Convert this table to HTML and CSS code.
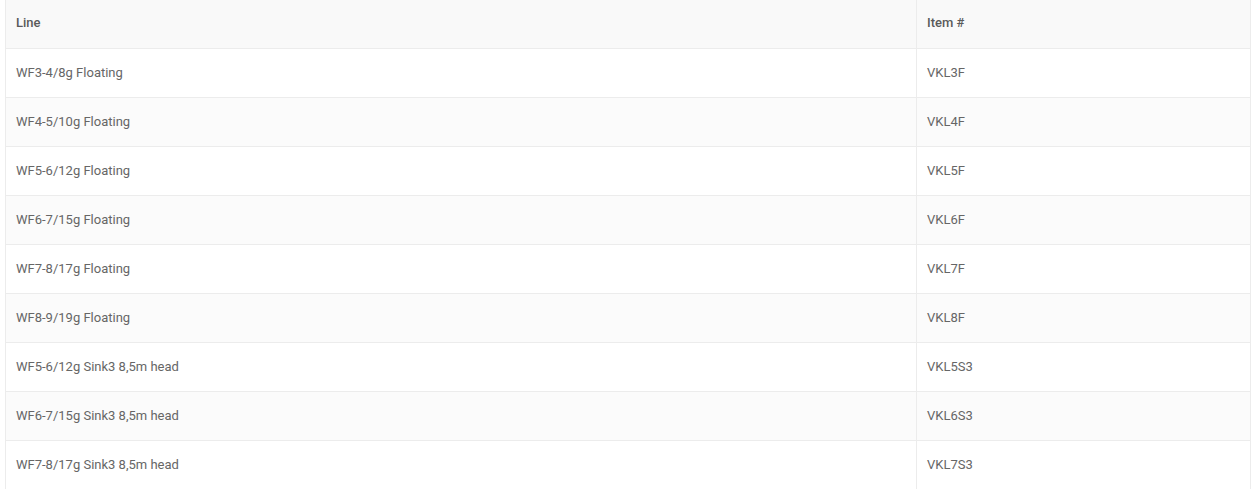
FILE: index.html
```html
<!DOCTYPE html>
<html>
<head>
<meta charset="utf-8">
<link rel="stylesheet" href="styles.css">
</head>
<body>
<table class="spec">
  <colgroup><col class="c-line"><col class="c-item"></colgroup>
  <thead>
    <tr><th>Line</th><th>Item #</th></tr>
  </thead>
  <tbody>
    <tr><td>WF3-4/8g Floating</td><td>VKL3F</td></tr>
    <tr><td>WF4-5/10g Floating</td><td>VKL4F</td></tr>
    <tr><td>WF5-6/12g Floating</td><td>VKL5F</td></tr>
    <tr><td>WF6-7/15g Floating</td><td>VKL6F</td></tr>
    <tr><td>WF7-8/17g Floating</td><td>VKL7F</td></tr>
    <tr><td>WF8-9/19g Floating</td><td>VKL8F</td></tr>
    <tr><td>WF5-6/12g Sink3 8,5m head</td><td>VKL5S3</td></tr>
    <tr><td>WF6-7/15g Sink3 8,5m head</td><td>VKL6S3</td></tr>
    <tr><td>WF7-8/17g Sink3 8,5m head</td><td>VKL7S3</td></tr>
  </tbody>
</table>
</body>
</html>
```
FILE: styles.css
```css
html, body {
  margin: 0;
  padding: 0;
  background: #ffffff;
}
body {
  padding: 0 5px;
  font-family: Roboto, "Liberation Sans", sans-serif;
  font-size: 13px;
  color: #666666;
}
.spec {
  width: 1245px;
  border-collapse: collapse;
  table-layout: fixed;
}
.c-line { width: 911px; }
.c-item { width: 334px; }
.spec th,
.spec td {
  padding: 0 10px;
  box-sizing: border-box;
  text-align: left;
  vertical-align: middle;
  border-left: 1px solid #ececec;
  border-right: 1px solid #ececec;
  border-bottom: 1px solid #ececec;
  line-height: 16px;
}
.spec th {
  height: 48px;
  font-weight: 500;
  color: #5a5a5a;
  background: #f9f9f9;
  padding-bottom: 2px;
}
.spec td {
  height: 49px;
  font-weight: 400;
}
.spec tbody tr:nth-child(even) td {
  background: #fbfbfb;
}
```
